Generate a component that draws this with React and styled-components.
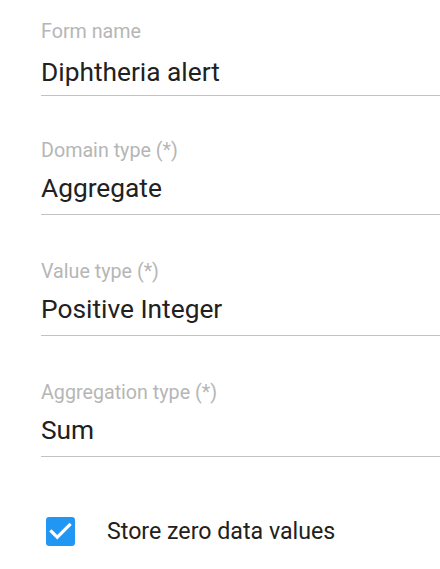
import React from 'react';
import styled, { createGlobalStyle } from 'styled-components';

const GlobalStyle = createGlobalStyle`
  html, body {
    margin: 0;
    padding: 0;
    background: #ffffff;
  }
  body {
    font-family: Roboto, "Noto Sans", "Liberation Sans", sans-serif;
    -webkit-font-smoothing: antialiased;
  }
`;

const FormContainer = styled.div`
  display: flex;
  flex-direction: column;
  padding: 20px 0 0 41px;
  width: 440px;
  box-sizing: border-box;
  overflow: hidden;
`;

const FieldWrap = styled.div`
  display: flex;
  flex-direction: column;
  margin-top: ${props => props.$space}px;
  border-bottom: 1px solid #c2c2c2;
`;

const FieldLabel = styled.label`
  font-size: 19.7px;
  line-height: 24px;
  height: 24px;
  color: #b6b6b6;
  white-space: nowrap;
`;

const FieldValue = styled.div`
  font-size: 26.3px;
  line-height: 32px;
  height: 32px;
  color: #212121;
  white-space: nowrap;
  margin-top: ${props => (props.$select ? 9 : 12)}px;
  margin-bottom: ${props => (props.$select ? 10 : 7)}px;
`;

const CheckRow = styled.label`
  display: flex;
  align-items: center;
  gap: 32px;
  margin-top: 60px;
  padding-left: 5px;
  height: 29px;
`;

const CheckBox = styled.svg`
  width: 29px;
  height: 29px;
  flex-shrink: 0;
  display: block;
`;

const CheckText = styled.span`
  font-size: 23.2px;
  line-height: 29px;
  color: #212121;
  white-space: nowrap;
`;

const fields = [
  { label: 'Form name', value: 'Diphtheria alert', select: false, space: 0 },
  { label: 'Domain type (*)', value: 'Aggregate', select: true, space: 43 },
  { label: 'Value type (*)', value: 'Positive Integer', select: true, space: 45 },
  { label: 'Aggregation type (*)', value: 'Sum', select: true, space: 45 },
];

const Field = ({ label, value, select, space }) => (
  <FieldWrap $space={space}>
    <FieldLabel>{label}</FieldLabel>
    <FieldValue $select={select}>{value}</FieldValue>
  </FieldWrap>
);

const Checked = () => (
  <CheckBox viewBox="3 3 18 18">
    <rect x="3" y="3" width="18" height="18" rx="2" fill="#2196f3" />
    <path d="M10 17l-5-5 1.41-1.41L10 14.17l7.59-7.59L19 8l-9 9z" fill="#ffffff" />
  </CheckBox>
);

const App = () => {
  return (
    <>
      <GlobalStyle />
      <FormContainer>
        {fields.map((f, i) => (
          <Field key={i} label={f.label} value={f.value} select={f.select} space={f.space} />
        ))}
        <CheckRow>
          <Checked />
          <CheckText>Store zero data values</CheckText>
        </CheckRow>
      </FormContainer>
    </>
  );
};

export default App;
